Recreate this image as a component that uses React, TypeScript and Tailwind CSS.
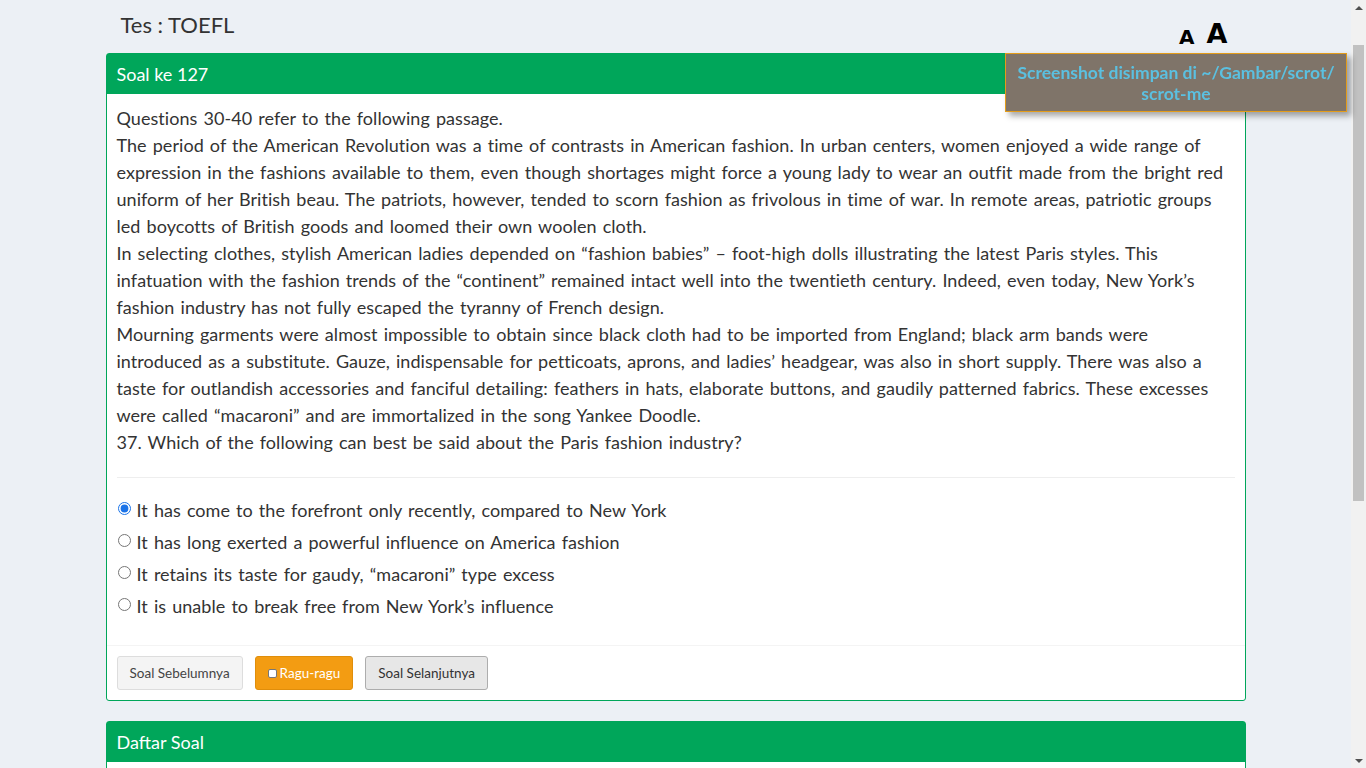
import { useState } from 'react'

const options = [
  'It has come to the forefront only recently, compared to New York',
  'It has long exerted a powerful influence on America fashion',
  'It retains its taste for gaudy, \u201cmacaroni\u201d type excess',
  'It is unable to break free from New York\u2019s influence',
]

export default function App() {
  const [answer, setAnswer] = useState(0)

  return (
    <div className="min-h-[1100px] pr-[15px] bg-[#ecf0f5] text-[#333] [font-family:'Lato','Noto_Sans',sans-serif]">
      {/* page scrollbar */}
      <div className="fixed right-0 top-0 w-[15px] h-screen bg-[#f1f1f1] flex flex-col items-center z-10">
        <div className="h-[15px] flex items-center justify-center">
          <div className="w-0 h-0 border-l-[4px] border-r-[4px] border-b-[4px] border-l-transparent border-r-transparent border-b-[#505050]" />
        </div>
        <div className="mt-[30px] w-[11px] h-[456px] bg-[#c1c1c1]" />
        <div className="flex-1" />
        <div className="h-[15px] flex items-center justify-center">
          <div className="w-0 h-0 border-l-[4px] border-r-[4px] border-t-[4px] border-l-transparent border-r-transparent border-t-[#505050]" />
        </div>
      </div>

      {/* Toast */}
      <div className="fixed left-[1005px] top-[53px] w-[342px] h-[59px] bg-[#7f7469] border border-[#e39c1a] shadow-[4px_4px_6px_rgba(0,0,0,0.35)] flex items-center justify-center text-center text-[17.5px] leading-[21px] font-bold text-[#5bc0e0] z-20">
        <span>Screenshot disimpan di ~/Gambar/scrot/<br />scrot-me</span>
      </div>

      <div className="w-[1140px] mx-auto relative pb-[40px]">
        {/* font size toggles */}
        <div className="absolute right-[18px] top-[20px] flex items-end gap-[12px] font-bold text-black [font-family:'DejaVu_Sans',sans-serif]">
          <span className="text-[20px] leading-none">A</span>
          <span className="text-[27px] leading-none">A</span>
        </div>

        <h1 className="px-[15px] pt-[11px] h-[53px] text-[22px] leading-[28px]">Tes : TOEFL</h1>

        {/* question box */}
        <div className="bg-white border border-[#00a65a] rounded-[3px]">
          <div className="bg-[#00a65a] text-white h-[40px] px-[10px] flex items-center text-[18px]">Soal ke 127</div>
          <div className="px-[10px] pt-[11px] [word-spacing:1.4px] tracking-[0.05px]">
            <div className="text-[18px] leading-[27px] pb-[21px] border-b border-[#eee]">
              <p>Questions 30-40 refer to the following passage.</p>
              <p>The period of the American Revolution was a time of contrasts in American fashion. In urban centers, women enjoyed a wide range of expression in the fashions available to them, even though shortages might force a young lady to wear an outfit made from the bright red uniform of her British beau. The patriots, however, tended to scorn fashion as frivolous in time of war. In remote areas, patriotic groups led boycotts of British goods and loomed their own woolen cloth.</p>
              <p>In selecting clothes, stylish American ladies depended on {'\u201c'}fashion babies{'\u201d'} {'\u2013'} foot-high dolls illustrating the latest Paris styles. This infatuation with the fashion trends of the {'\u201c'}continent{'\u201d'} remained intact well into the twentieth century. Indeed, even today, New York{'\u2019'}s fashion industry has not fully escaped the tyranny of French design.</p>
              <p>Mourning garments were almost impossible to obtain since black cloth had to be imported from England; black arm bands were introduced as a substitute. Gauze, indispensable for petticoats, aprons, and ladies{'\u2019'} headgear, was also in short supply. There was also a taste for outlandish accessories and fanciful detailing: feathers in hats, elaborate buttons, and gaudily patterned fabrics. These excesses were called {'\u201c'}macaroni{'\u201d'} and are immortalized in the song Yankee Doodle.</p>
              <p>37. Which of the following can best be said about the Paris fashion industry?</p>
            </div>
            <div className="pt-[16px] pb-[23px] flex flex-col">
              {options.map((o, i) => (
                <label key={i} className="flex items-center h-[32px] text-[18px] cursor-pointer">
                  <input
                    type="radio"
                    name="ans"
                    checked={answer === i}
                    onChange={() => setAnswer(i)}
                    className="w-[13px] h-[13px] ml-[1px] mr-[6px] -mt-[4px] accent-[#1a73e8]"
                  />
                  <span>{o}</span>
                </label>
              ))}
            </div>
          </div>
          <div className="border-t border-[#f4f4f4] px-[10px] pt-[10px] pb-[10px] flex gap-[12px] text-[13.5px]">
            <button className="h-[34px] px-[12px] bg-[#f4f4f4] border border-[#ddd] rounded-[3px] text-[#444]">Soal Sebelumnya</button>
            <button className="h-[34px] px-[12px] bg-[#f39c12] border border-[#e08e0b] rounded-[3px] text-white flex items-center gap-[3px]">
              <span className="w-[9px] h-[9px] bg-white border border-[#777] rounded-[2px]" />
              Ragu-ragu
            </button>
            <button className="h-[34px] px-[12px] bg-[#e7e7e7] border border-[#adadad] rounded-[3px] text-[#333]">Soal Selanjutnya</button>
          </div>
        </div>

        {/* list box */}
        <div className="mt-[20px] bg-white border border-[#00a65a] rounded-[3px]">
          <div className="bg-[#00a65a] text-white h-[40px] px-[10px] flex items-center text-[18px]">Daftar Soal</div>
          <div className="h-[300px]" />
        </div>
      </div>
    </div>
  )
}
